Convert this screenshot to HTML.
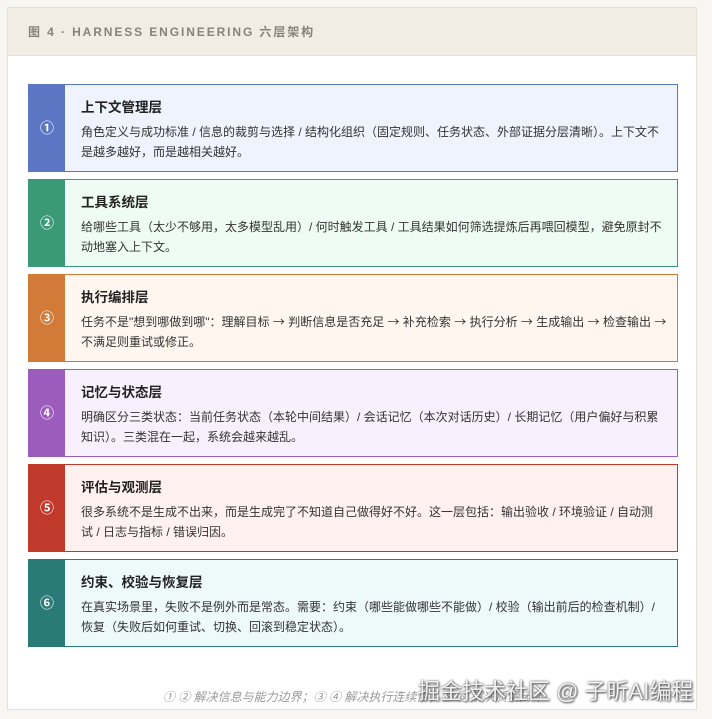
<!DOCTYPE html>
<html><head><meta charset="utf-8"><style>
*{margin:0;padding:0;box-sizing:border-box}
body{width:712px;height:719px;background:#f8f6f2;font-family:"Liberation Sans","Noto Sans CJK SC",sans-serif;position:relative;overflow:hidden}
.card{position:absolute;left:7px;top:7px;width:690px;height:703px;background:#fff;border:1px solid #e4e0d8}
.hdr{height:48px;background:#f1ece4;border-bottom:1px solid #e6e0d6;padding-left:20px;line-height:48px;font-size:12px;letter-spacing:1.9px;color:#8a8278;font-weight:bold}
.row{position:absolute;left:20px;width:650px;height:88px;border:1px solid;display:flex}
.num{width:36px;color:#fff;display:flex;align-items:center;justify-content:center;font-size:14px;font-weight:bold}
.txt{padding:14px 0 0 16px;flex:1}
.t{font-size:13.5px;font-weight:600;color:#222;line-height:18px;margin-bottom:5px}
.d{font-size:12px;color:#333;line-height:20px;padding-right:14px}
.a{font-family:"Noto Sans CJK SC",sans-serif}
.foot{position:absolute;left:0;width:690px;top:680px;text-align:center;font-size:12px;font-style:italic;color:#999}
.wm{position:absolute;left:418px;top:674px;font-size:22px;color:rgba(255,255,255,.9);text-shadow:0 0 2px #555,1px 1px 2px #444;white-space:nowrap}
</style></head><body>
<div class="card">
<div class="hdr">图 4 · HARNESS ENGINEERING 六层架构</div>
<div class="row" style="top:76px;border-color:#5b77c4;background:#eef3fd"><div class="num" style="background:#5b77c4">①</div><div class="txt"><div class="t">上下文管理层</div><div class="d">角色定义与成功标准 / 信息的裁剪与选择 / 结构化组织（固定规则、任务状态、外部证据分层清晰）。上下文不是越多越好，而是越相关越好。</div></div></div>
<div class="row" style="top:171px;border-color:#3a9a78;background:#effcf6"><div class="num" style="background:#3a9a78">②</div><div class="txt"><div class="t">工具系统层</div><div class="d">给哪些工具（太少不够用，太多模型乱用）/ 何时触发工具 / 工具结果如何筛选提炼后再喂回模型，避免原封不动地塞入上下文。</div></div></div>
<div class="row" style="top:266px;border-color:#d27a38;background:#fff7ef"><div class="num" style="background:#d27a38">③</div><div class="txt"><div class="t">执行编排层</div><div class="d" style="padding-right:6px">任务不是"想到哪做到哪"：理解目标 <span class="a">→</span> 判断信息是否充足 <span class="a">→</span> 补充检索 <span class="a">→</span> 执行分析 <span class="a">→</span> 生成输出 <span class="a">→</span> <span style="white-space:nowrap">检查输出 <span class="a">→</span></span> 不满足则重试或修正。</div></div></div>
<div class="row" style="top:361px;border-color:#9b5cbd;background:#f8f1fd"><div class="num" style="background:#9b5cbd">④</div><div class="txt"><div class="t">记忆与状态层</div><div class="d">明确区分三类状态：当前任务状态（本轮中间结果）/ 会话记忆（本次对话历史）/ 长期记忆（用户偏好与积累知识）。三类混在一起，系统会越来越乱。</div></div></div>
<div class="row" style="top:456px;border-color:#c0392b;background:#fff1f0"><div class="num" style="background:#c0392b">⑤</div><div class="txt"><div class="t">评估与观测层</div><div class="d">很多系统不是生成不出来，而是生成完了不知道自己做得好不好。这一层包括：输出验收 / 环境验证 / 自动测试 / 日志与指标 / 错误归因。</div></div></div>
<div class="row" style="top:551px;border-color:#2a7a78;background:#eefafa"><div class="num" style="background:#2a7a78">⑥</div><div class="txt"><div class="t">约束、校验与恢复层</div><div class="d">在真实场景里，失败不是例外而是常态。需要：约束（哪些能做哪些不能做）/ 校验（输出前后的检查机制）/ 恢复（失败后如何重试、切换、回滚到稳定状态）。</div></div></div>
<div class="foot">① ② 解决信息与能力边界；③ ④ 解决执行连续性；⑤ ⑥ 解决质量闭环</div>
</div>
<div class="wm">掘金技术社区 @ 子昕AI编程</div>
</body></html>
